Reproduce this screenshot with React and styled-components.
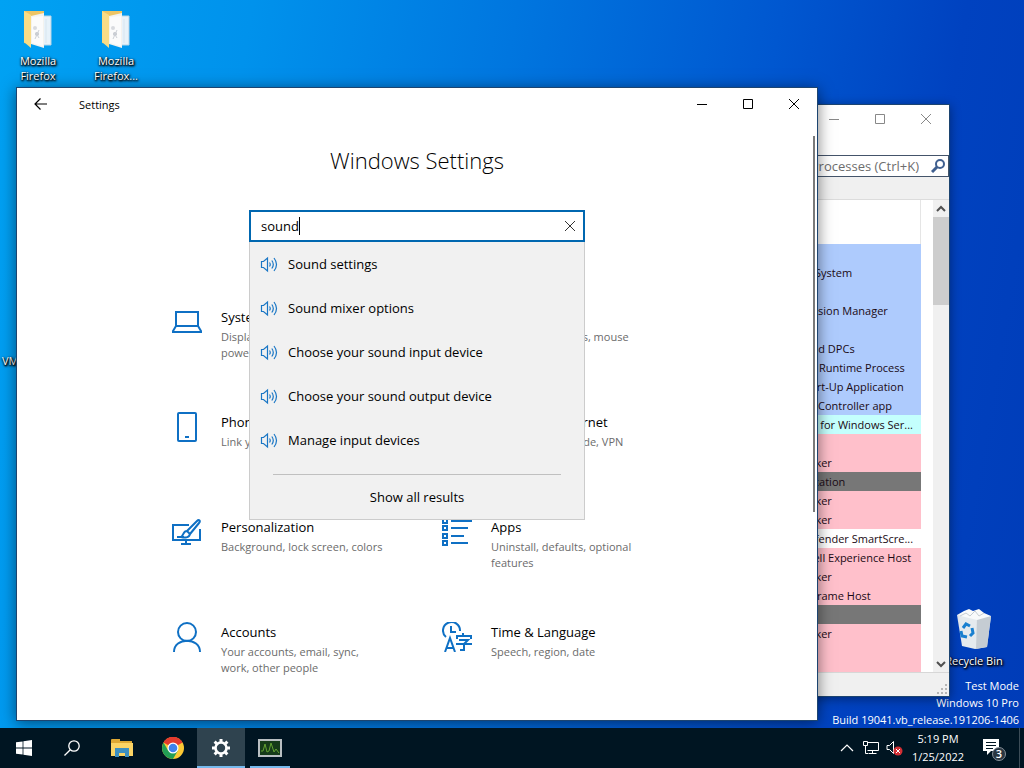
import React from "react";
import styled, { createGlobalStyle } from "styled-components";

const GlobalStyle = createGlobalStyle`
  * {
    box-sizing: border-box;
  }

  body {
    margin: 0;
    font-family: "Open Sans", "Noto Sans", sans-serif;
    font-size: 11px;
  }

  button,
  input {
    font-family: inherit;
    border: none;
    background: none;
    padding: 0;
    color: inherit;
  }
`;

const Screen = styled.div`
  min-height: 100vh;
  display: flex;
  flex-direction: column;
`;

const Desktop = styled.main`
  flex: 1;
  position: relative;
  overflow: hidden;
  background: linear-gradient(
    100deg,
    #00a2f3 0%,
    #0092ec 22%,
    #0076df 45%,
    #0057d0 68%,
    #0042c0 84%,
    #003cb8 100%
  );
`;

const Shortcut = styled.button`
  position: absolute;
  left: ${(props) => props.$left};
  right: ${(props) => props.$right};
  top: ${(props) => props.$top}px;
  width: 76px;
  display: flex;
  flex-direction: column;
  align-items: center;
  gap: 3px;
  padding: 0 8px;
  color: white;
  font-size: 11px;
  line-height: 15px;
  white-space: ${(props) => (props.$single ? "nowrap" : "normal")};
  text-shadow: 0 1px 2px black, 1px 1px 2px black, 1px 1px 3px black;
`;

const Watermark = styled.div`
  position: absolute;
  right: 5px;
  bottom: 0;
  color: white;
  text-align: right;
  font-size: 11px;
  line-height: 17px;
`;

const Window = styled.section`
  position: absolute;
  display: flex;
  flex-direction: column;
  background: white;
  border: 1px solid #1c4470;
`;

const SettingsFrame = styled(Window)`
  left: 16px;
  right: 206px;
  top: 87px;
  bottom: 7px;
  box-shadow: 0 2px 14px rgba(0, 0, 0, 0.5);
`;

const ExplorerFrame = styled(Window)`
  left: 740px;
  right: 74px;
  top: 104px;
  bottom: 31px;
  box-shadow: 0 2px 10px rgba(0, 0, 0, 0.4);
`;

const TitleBar = styled.header`
  height: ${(props) => (props.$compact ? 28 : 32)}px;
  flex-shrink: 0;
  display: flex;
  align-items: center;
`;

const BackButton = styled.button`
  width: 48px;
  height: 32px;
  display: flex;
  align-items: center;
  justify-content: center;
`;

const WindowName = styled.span`
  flex: 1;
  padding-left: 14px;
  font-size: 11px;
`;

const Controls = styled.div`
  display: flex;
  margin-left: auto;
  color: ${(props) => (props.$dim ? "#888" : "#000")};
`;

const ControlButton = styled.button`
  width: 46px;
  height: 28px;
  display: flex;
  align-items: center;
  justify-content: center;
`;

const SettingsBody = styled.div`
  flex: 1;
  min-height: 0;
  overflow: hidden;
  display: flex;
  flex-direction: column;
  align-items: center;
  background: linear-gradient(#7a7a7a, #7a7a7a) right 2px top 16px / 2px 376px no-repeat;
`;

const Heading = styled.h1`
  margin: 24px 0 34px;
  font-size: 22px;
  line-height: 32px;
  font-weight: 300;
`;

const SearchArea = styled.div`
  position: relative;
  width: 336px;
`;

const SearchBox = styled.div`
  height: 32px;
  border: 2px solid #0067b0;
  background: white;
  display: flex;
  align-items: center;
  padding: 0 8px 0 10px;
`;

const SearchInput = styled.input`
  field-sizing: content;
  font-size: 13px;
  outline: none;
  caret-color: transparent;
`;

const Caret = styled.span`
  width: 1px;
  height: 18px;
  background: black;
`;

const ClearButton = styled.button`
  margin-left: auto;
  display: flex;
  color: #333;
`;

const Suggestions = styled.div`
  position: absolute;
  z-index: 1;
  top: 100%;
  left: 0;
  right: 0;
  background: #f1f1f1;
  border: 1px solid #ccc;
  border-top: none;
  display: flex;
  flex-direction: column;
`;

const Suggestion = styled.button`
  height: 44px;
  padding: 0 10px;
  display: flex;
  align-items: center;
  gap: 10px;
  font-size: 13px;
`;

const Divider = styled.hr`
  width: 288px;
  margin: 12px auto 0;
  border: none;
  border-top: 1px solid #c0c0c0;
`;

const ShowAll = styled.button`
  height: 44px;
  font-size: 13px;
`;

const Tiles = styled.nav`
  width: 100%;
  max-width: 540px;
  margin-top: 65px;
  display: grid;
  grid-template-columns: repeat(auto-fill, minmax(250px, 1fr));
  grid-auto-rows: 105px;
`;

const Tile = styled.a`
  display: flex;
  align-items: flex-start;
  gap: 19px;
  padding: 0 31px 0 25px;
  color: black;
  text-decoration: none;

  svg {
    flex-shrink: 0;
  }
`;

const TileTitle = styled.div`
  font-size: 13px;
  line-height: 20px;
`;

const TileText = styled.div`
  margin-top: 2px;
  font-size: 11px;
  line-height: 16px;
  color: #6b6b6b;
`;

const ProcessSearch = styled.label`
  margin-top: 22px;
  height: 22px;
  flex-shrink: 0;
  display: flex;
  align-items: center;
  gap: 12px;
  padding-right: 2px;
  border: 1px solid #44546a;
`;

const ProcessInput = styled.input`
  flex: 1;
  min-width: 0;
  text-align: right;
  font-size: 13px;

  &::placeholder {
    color: #6d6d6d;
    opacity: 1;
  }
`;

const Toolbar = styled.div`
  height: 23px;
  flex-shrink: 0;
  background: #f0f0f0;
  border-bottom: 1px solid #dcdcdc;
`;

const ListArea = styled.div`
  flex: 1;
  min-height: 0;
  display: flex;
`;

const TableClip = styled.div`
  flex: 1;
  overflow: hidden;
  margin-right: 12px;
`;

const ProcessTable = styled.table`
  width: 100%;
  table-layout: fixed;
  border-collapse: collapse;

  th {
    height: 44px;
    border-right: 1px solid #e5e5e5;
  }
`;

const rowColors = {
  white: "white",
  blue: "#aecbfd",
  cyan: "#c4fffd",
  pink: "#ffc0cb",
  gray: "#777",
};

const ProcessRow = styled.tr`
  height: 19px;
  background: ${(props) => rowColors[props.$color]};
  color: #1a0a14;

  td {
    height: 19px;
    padding: 0 0 0 10px;
    font-size: 11px;
    line-height: 19px;
    white-space: nowrap;
    overflow: hidden;
  }
`;

const ScrollTrack = styled.div`
  width: 16px;
  background: #f0f0f0;
  display: flex;
  flex-direction: column;
  align-items: center;
  justify-content: space-between;
`;

const ScrollThumb = styled.div`
  width: 100%;
  height: 88px;
  margin-bottom: auto;
  background: #cdcdcd;
`;

const StatusBar = styled.footer`
  height: 24px;
  flex-shrink: 0;
  background: #f0f0f0;
  border-top: 1px solid #d7d7d7;
  display: flex;
  align-items: flex-end;
  justify-content: flex-end;
`;

const Taskbar = styled.footer`
  height: 40px;
  flex-shrink: 0;
  display: flex;
  justify-content: space-between;
  background: #001522;
  color: white;
`;

const TaskGroup = styled.div`
  display: flex;
  align-items: stretch;
`;

const TaskButton = styled.button`
  width: ${(props) => props.$width || 48}px;
  display: flex;
  align-items: center;
  justify-content: center;
  background: ${(props) => (props.$active ? "#2f434f" : "none")};
  box-shadow: ${(props) => (props.$open ? "inset 0 -2px #76b9ed" : "none")};

  &:last-child {
    margin-left: 5px;
  }
`;

const Tray = styled.div`
  display: flex;
  align-items: center;
  gap: 5px;
`;

const TrayButton = styled.button`
  display: flex;
`;

const Clock = styled.button`
  width: 60px;
  font-size: 11px;
  line-height: 18px;
  text-align: center;
`;

const NoticeButton = styled.button`
  width: 41px;
  display: flex;
  padding-left: 9px;
`;

const ShowDesktop = styled.button`
  width: 5px;
  height: 40px;
  border-left: 1px solid #3c4c57;
`;

const FolderIcon = () => (
  <svg width="30" height="40" viewBox="0 0 30 40">
    <path d="M1 1h20v33H8L1 33z" fill="#edc565" />
    <path d="M18 6h10v29H18z" fill="#e7f2fa" stroke="#b7d5e7" />
    <path d="M8 6l13-3v35L8 34z" fill="#f4f3ef" />
    <path d="M9 7l11-1v30L9 33z" fill="#fbfbfb" />
    <path d="M1 1l7 4v33l-7-6z" fill="#f9dc87" />
    <circle cx="12" cy="18" r="2" fill="#d8dade" />
    <circle cx="14" cy="24" r="2" fill="#c3c7cd" />
    <path d="M12 29l4-9M16 28l-3-5" stroke="#ccd0d6" />
    <path d="M23 9v24" stroke="#d8e5ee" />
  </svg>
);

const BinIcon = () => (
  <svg width="36" height="42" viewBox="0 0 36 42">
    <path d="M1 7l34 1-4 31-12 2-13-3z" fill="#e5eaee" />
    <path d="M21 10l14-2-4 31-11 2z" fill="#c5ccd3" />
    <path d="M1 7l7-4 5-2 4 2 6-2 5 4 7 3-14 4z" fill="#f9fafb" />
    <path d="M4 8l6-3 4 3 5-5 4 5 5-3" fill="none" stroke="#c6cdd2" />
    <g fill="none" stroke="#1a80d0" strokeWidth="3">
      <path d="M7 20l3-4 4 2" />
      <path d="M16 20l1 5-3 3" />
      <path d="M11 29l-5-1-1-5" />
    </g>
  </svg>
);

const LineIcon = ({ children, size = 30 }) => (
  <svg
    width={size}
    height={size}
    viewBox={`0 0 ${size} ${size}`}
    fill="none"
    stroke="#0f70c4"
    strokeWidth="2"
  >
    {children}
  </svg>
);

const SystemIcon = () => (
  <LineIcon>
    <path d="M4 5h22v14H4zM4 19l-3 5v1h28v-1l-3-5" />
  </LineIcon>
);

const PhoneIcon = () => (
  <LineIcon>
    <rect x="6" y="1" width="18" height="28" rx="1" />
    <path d="M13 25h4" />
  </LineIcon>
);

const PersonalizationIcon = () => (
  <LineIcon>
    <path d="M17 8H1v15h27V12M14 23v4M9 27h10M5 20h7" />
    <path d="M15 14L25 4c2-2 4 0 2 2L18 17M15 14l3 3M15 14c-4 0-3 4-6 6 4 1 8 1 9-3" />
  </LineIcon>
);

const AppsIcon = () => (
  <LineIcon>
    <path d="M1 2h4v4H1zM1 9h4v4H1zM1 17h4v4H1zM1 24h4v4H1zM9 4h21M9 11h17M9 19h13M9 26h17" />
  </LineIcon>
);

const AccountsIcon = () => (
  <LineIcon>
    <circle cx="15" cy="10" r="9" />
    <path d="M2 30c0-15 26-15 26 0" />
  </LineIcon>
);

const TimeIcon = () => (
  <LineIcon>
    <path d="M4 15A8.5 8.5 0 1 1 18 9M9 4v6h5" />
    <path d="M3 30l5-14 5 14M5 26h6" />
    <path d="M15 17v-3h14v3M21 11v3M17 18h9l-4 4v6h-4M14 22h16" />
  </LineIcon>
);

const DevicesIcon = () => (
  <LineIcon>
    <rect x="3" y="5" width="14" height="20" />
    <rect x="20" y="12" width="8" height="13" rx="4" />
  </LineIcon>
);

const GlobeIcon = () => (
  <LineIcon>
    <circle cx="15" cy="15" r="13" />
    <path d="M2 15h26M15 2c-8 8-8 18 0 26M15 2c8 8 8 18 0 26" />
  </LineIcon>
);

const SpeakerIcon = () => (
  <svg width="18" height="18" viewBox="0 0 18 18" fill="none" stroke="#1976c5" strokeWidth="1.2">
    <path d="M1.500 6.500h2L7.500 3v13l-4-3.500h-2z" />
    <path d="M9.500 7.500q1.500 2 0 4M11.800 5.500q3 4 0 8M14 3q5 6.500 0 13" />
  </svg>
);

const WindowControls = ({ dim }) => (
  <Controls $dim={dim}>
    <ControlButton aria-label="Minimize">
      <svg width="10" height="10" stroke="currentColor">
        <path d="M0 5.500h10" />
      </svg>
    </ControlButton>
    <ControlButton aria-label="Maximize">
      <svg width="10" height="10" fill="none" stroke="currentColor">
        <path d="M.5.5h9v9h-9z" />
      </svg>
    </ControlButton>
    <ControlButton aria-label="Close">
      <svg width="10" height="10" stroke="currentColor">
        <path d="M0 0l10 10M10 0L0 10" />
      </svg>
    </ControlButton>
  </Controls>
);

const tiles = [
  { title: "System", text: "Display, sound, notifications, power", icon: <SystemIcon /> },
  { title: "Devices", text: "Bluetooth, printers, mouse", icon: <DevicesIcon /> },
  { title: "Phone", text: "Link your Android, iPhone", icon: <PhoneIcon /> },
  { title: "Network & Internet", text: "Wi-Fi, airplane mode, VPN", icon: <GlobeIcon /> },
  {
    title: "Personalization",
    text: "Background, lock screen, colors",
    icon: <PersonalizationIcon />,
  },
  { title: "Apps", text: "Uninstall, defaults, optional features", icon: <AppsIcon /> },
  {
    title: "Accounts",
    text: "Your accounts, email, sync, work, other people",
    icon: <AccountsIcon />,
  },
  { title: "Time & Language", text: "Speech, region, date", icon: <TimeIcon /> },
];

const suggestions = [
  "Sound settings",
  "Sound mixer options",
  "Choose your sound input device",
  "Choose your sound output device",
  "Manage input devices",
];

const processes = [
  ["blue", ""],
  ["blue", "NT Kernel & System"],
  ["blue", ""],
  ["blue", "Windows Session Manager"],
  ["blue", ""],
  ["blue", "Interrupts and DPCs"],
  ["blue", "Client Server Runtime Process"],
  ["blue", "Windows Start-Up Application"],
  ["blue", "Services and Controller app"],
  ["cyan", "Host Process for Windows Ser..."],
  ["pink", ""],
  ["pink", "Runtime Broker"],
  ["gray", "Search application"],
  ["pink", "Runtime Broker"],
  ["pink", "Runtime Broker"],
  ["white", "Windows Defender SmartScre..."],
  ["pink", "Windows Shell Experience Host"],
  ["pink", "Runtime Broker"],
  ["pink", "Application Frame Host"],
  ["gray", ""],
  ["pink", "Runtime Broker"],
  ["pink", ""],
  ["pink", ""],
];

const ProcessWindow = () => (
  <ExplorerFrame>
    <TitleBar $compact>
      <WindowControls dim />
    </TitleBar>
    <ProcessSearch>
      <ProcessInput placeholder="Search Processes (Ctrl+K)" aria-label="Search processes" />
      <svg width="15" height="16" viewBox="0 0 15 16" fill="none" stroke="#3f5f8f" strokeWidth="2">
        <circle cx="9" cy="6" r="4" />
        <path d="M6 9l-5 5" strokeWidth="3" />
      </svg>
    </ProcessSearch>
    <Toolbar />
    <ListArea>
      <TableClip>
        <ProcessTable>
          <thead>
            <tr>
              <th aria-label="Description" />
            </tr>
          </thead>
          <tbody>
            {processes.map(([color, name], index) => (
              <ProcessRow key={index} $color={color}>
                <td>{name}</td>
              </ProcessRow>
            ))}
          </tbody>
        </ProcessTable>
      </TableClip>
      <ScrollTrack>
        <svg width="16" height="17" fill="none" stroke="#505050" strokeWidth="2">
          <path d="M4 11l4-4 4 4" />
        </svg>
        <ScrollThumb />
        <svg width="16" height="17" fill="none" stroke="#505050" strokeWidth="2">
          <path d="M4 7l4 4 4-4" />
        </svg>
      </ScrollTrack>
    </ListArea>
    <StatusBar>
      <svg width="12" height="12" fill="#b5b5b5">
        <path d="M8 0h2v2H8zM8 4h2v2H8zM8 8h2v2H8zM4 4h2v2H4zM4 8h2v2H4zM0 8h2v2H0z" />
      </svg>
    </StatusBar>
  </ExplorerFrame>
);

const SettingsWindow = () => (
  <SettingsFrame>
    <TitleBar>
      <BackButton aria-label="Back">
        <svg width="14" height="12" fill="none" stroke="black" strokeWidth="1.200">
          <path d="M13 6H1M6.500.5L1 6l5.500 5.500" />
        </svg>
      </BackButton>
      <WindowName>Settings</WindowName>
      <WindowControls />
    </TitleBar>
    <SettingsBody>
      <Heading>Windows Settings</Heading>
      <SearchArea>
        <SearchBox>
          <SearchInput defaultValue="sound" aria-label="Find a setting" />
          <Caret />
          <ClearButton aria-label="Clear">
            <svg width="10" height="10" stroke="currentColor">
              <path d="M0 0l10 10M10 0L0 10" />
            </svg>
          </ClearButton>
        </SearchBox>
        <Suggestions>
          {suggestions.map((label) => (
            <Suggestion key={label}>
              <SpeakerIcon />
              {label}
            </Suggestion>
          ))}
          <Divider />
          <ShowAll>Show all results</ShowAll>
        </Suggestions>
      </SearchArea>
      <Tiles>
        {tiles.map((tile) => (
          <Tile key={tile.title} href="#">
            {tile.icon}
            <div>
              <TileTitle>{tile.title}</TileTitle>
              <TileText>{tile.text}</TileText>
            </div>
          </Tile>
        ))}
      </Tiles>
    </SettingsBody>
  </SettingsFrame>
);

const TaskbarRow = () => (
  <Taskbar>
    <TaskGroup>
      <TaskButton aria-label="Start">
        <svg width="16" height="16" fill="white">
          <path d="M0 2.300l6.600-.9v6.200H0zM7.400 1.300L16 0v7.600H7.400zM0 8.400h6.600v6.200L0 13.700zM7.400 8.400H16V16l-8.600-1.200z" />
        </svg>
      </TaskButton>
      <TaskButton aria-label="Search">
        <svg width="16" height="16" fill="none" stroke="white" strokeWidth="1.300">
          <circle cx="10" cy="6" r="5.200" />
          <path d="M6.300 9.700L.5 15.500" />
        </svg>
      </TaskButton>
      <TaskButton $width={52} aria-label="File Explorer">
        <svg width="22" height="18">
          <path d="M0 1q0-1 1-1h8v2h12v15H0z" fill="#dfa934" />
          <path d="M0 4h22v13H0z" fill="#fbd465" />
          <path d="M4 9h14v9h-4v-4H8v4H4z" fill="#3d8fc0" />
        </svg>
      </TaskButton>
      <TaskButton $width={49} aria-label="Chrome">
        <svg width="22" height="22" viewBox="0 0 22 22">
          <circle cx="11" cy="11" r="11" fill="#fcc934" />
          <path d="M11 11L1.500 5.500A11 11 0 0 1 20.500 5.500z" fill="#e33b2e" />
          <path d="M11 5.500h9.500A11 11 0 0 0 1.500 5.500z" fill="#e33b2e" />
          <path d="M1.500 5.500A11 11 0 0 0 11 22l4.800-8.200L11 11 6.200 13.800z" fill="#229e55" />
          <circle cx="11" cy="11" r="5.500" fill="white" />
          <circle cx="11" cy="11" r="4.300" fill="#3f82ec" />
        </svg>
      </TaskButton>
      <TaskButton $active $open aria-label="Settings">
        <svg width="20" height="20" viewBox="0 0 20 20" fill="none" stroke="white">
          <circle cx="10" cy="10" r="5.500" strokeWidth="2.600" />
          <path
            d="M10 1v3M10 16v3M1 10h3M16 10h3M3.600 3.600l2.200 2.200M14.200 14.200l2.200 2.200M16.400 3.600l-2.200 2.200M5.800 14.200l-2.200 2.200"
            strokeWidth="3"
          />
        </svg>
      </TaskButton>
      <TaskButton $width={40} $open aria-label="Process Explorer">
        <svg width="24" height="18">
          <rect x="1" y="1" width="22" height="16" fill="#153b19" stroke="#b9bfc2" strokeWidth="2" />
          <path d="M3 12h2l2-7 2 8 2-1 2-8 3 9 2-3 3 4" fill="none" stroke="#62a132" />
        </svg>
      </TaskButton>
    </TaskGroup>
    <Tray>
      <TrayButton aria-label="Show hidden icons">
        <svg width="18" height="10" fill="none" stroke="white" strokeWidth="1.200">
          <path d="M2 8l6-6 6 6" />
        </svg>
      </TrayButton>
      <TrayButton aria-label="Network">
        <svg width="18" height="16" fill="none" stroke="white">
          <path d="M5.500 2.500h11v8h-11M10.500 10.500v3M6.500 13.500h8M1.500 1.500h4v4h-4zM3.500 5.500v8H6" />
        </svg>
      </TrayButton>
      <TrayButton aria-label="Volume">
        <svg width="18" height="16" fill="none" stroke="white">
          <path d="M2 5.500h2.500l4-4v12l-4-4H2z" />
          <circle cx="13" cy="11" r="4.500" fill="#d32f35" stroke="none" />
          <path d="M11 9l4 4M15 9l-4 4" />
        </svg>
      </TrayButton>
      <Clock>
        5:19 PM
        <br />
        1/25/2022
      </Clock>
      <NoticeButton aria-label="Notifications">
        <svg width="26" height="26" viewBox="0 0 26 26">
          <path d="M1 4h16v12H9l-4 4v-4H1z" fill="white" />
          <path d="M4 7.500h10M4 10.500h10M4 13.500h7" stroke="#001522" />
          <circle cx="17" cy="19" r="6.500" fill="#2a3641" stroke="#87919a" />
          <text x="17" y="23" fill="white" fontSize="11" fontWeight="600" textAnchor="middle">
            3
          </text>
        </svg>
      </NoticeButton>
      <ShowDesktop aria-label="Show desktop" />
    </Tray>
  </Taskbar>
);

const App = () => {
  return (
    <Screen>
      <GlobalStyle />
      <Desktop>
        <Shortcut $left="0" $top={10}>
          <FolderIcon />
          Mozilla Firefox
        </Shortcut>
        <Shortcut $left="78px" $top={10}>
          <FolderIcon />
          Mozilla Firefox...
        </Shortcut>
        <Shortcut $left="0" $top={353} $single>
          VMware Tools
        </Shortcut>
        <Shortcut $right="12px" $top={608} $single>
          <BinIcon />
          Recycle Bin
        </Shortcut>
        <Watermark>
          Test Mode
          <br />
          Windows 10 Pro
          <br />
          Build 19041.vb_release.191206-1406
        </Watermark>
        <ProcessWindow />
        <SettingsWindow />
      </Desktop>
      <TaskbarRow />
    </Screen>
  );
};

export default App;
